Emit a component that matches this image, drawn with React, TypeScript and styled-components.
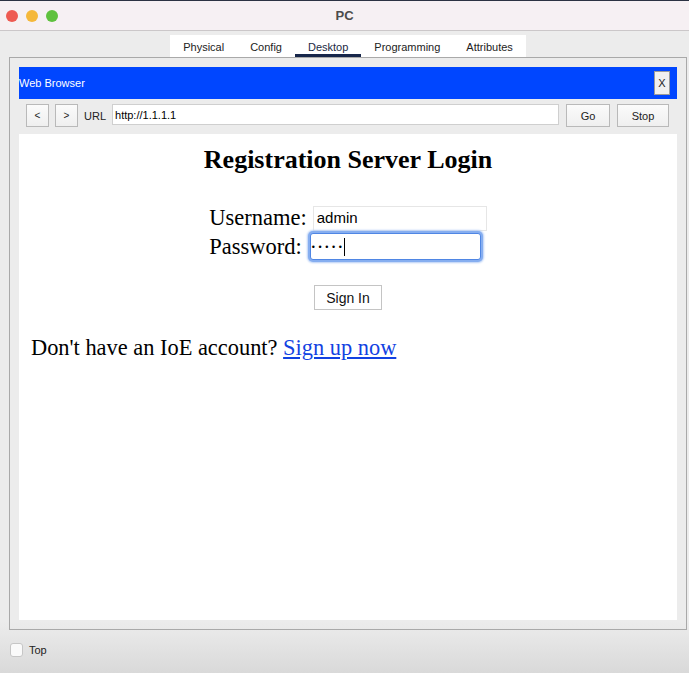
import styled, { createGlobalStyle } from 'styled-components'

const GlobalStyle = createGlobalStyle`
  html, body {
    margin: 0;
    padding: 0;
    background: #ececec;
  }
  * {
    box-sizing: border-box;
  }
`

const Window = styled.div`
  width: 689px;
  height: 673px;
  display: flex;
  flex-direction: column;
  overflow: hidden;
  font-family: 'Liberation Sans', Arial, sans-serif;
  background: #ececec;
`

const TitleBar = styled.header`
  position: relative;
  flex-shrink: 0;
  height: 31px;
  display: flex;
  align-items: center;
  justify-content: center;
  background: #f6f0f3;
  border-top: 1px solid #2b3243;
  border-bottom: 1px solid #cbc7c9;
`

const Lights = styled.div`
  position: absolute;
  left: 6px;
  top: 9px;
  display: flex;
  gap: 8px;
`

const Light = styled.span<{ $color: string }>`
  width: 12px;
  height: 12px;
  border-radius: 50%;
  background: ${({ $color }) => $color};
`

const WindowTitle = styled.h1`
  margin: 0;
  font-size: 13px;
  font-weight: 700;
  color: #4b4b4b;
`

const Body = styled.main`
  flex: 1;
  display: flex;
  flex-direction: column;
  background: linear-gradient(#ececec 0%, #ececec 92%, #d9d9d9 100%);
`

const TabStrip = styled.nav`
  align-self: center;
  display: flex;
  height: 22px;
  margin: 4px 0 0 7px;
  background: #ffffff;
`

const Tab = styled.span<{ $active?: boolean }>`
  display: flex;
  align-items: center;
  padding: 4px 13px 0;
  font-size: 11px;
  color: ${({ $active }) => ($active ? '#1c2a44' : '#222222')};
  border-bottom: 3px solid
    ${({ $active }) => ($active ? '#17264a' : 'transparent')};
`

const Frame = styled.section`
  flex-shrink: 0;
  height: 573px;
  margin: 0 2px 0 9px;
  padding: 9px;
  border: 1px solid #a9a9a9;
  display: flex;
  flex-direction: column;
`

const BlueBar = styled.div`
  height: 32px;
  flex-shrink: 0;
  display: flex;
  align-items: center;
  justify-content: space-between;
  padding-right: 7px;
  background: #0046ff;
  color: #ffffff;
  font-size: 11px;
`

const CloseButton = styled.button`
  width: 16px;
  height: 24px;
  padding: 0;
  font-family: inherit;
  font-size: 11px;
  color: #222;
  background: #f0f0f0;
  border: 1px solid #9a9a9a;
`

const Toolbar = styled.div`
  flex-shrink: 0;
  display: flex;
  align-items: center;
  gap: 6px;
  padding: 5px 8px 7px 7px;
`

const NavButton = styled.button<{ $w: number; $gap?: number }>`
  width: ${({ $w }) => $w}px;
  height: 23px;
  padding: 0;
  margin-left: ${({ $gap }) => $gap ?? 0}px;
  font-family: inherit;
  font-size: ${({ $w }) => ($w < 30 ? 10 : 11)}px;
  color: #222;
  background: linear-gradient(#fbfbfb, #efefef);
  border: 1px solid #b9b9b9;
`

const UrlLabel = styled.span`
  font-size: 11px;
  color: #222;
`

const UrlInput = styled.div`
  flex: 1;
  height: 21px;
  margin-top: -2px;
  display: flex;
  align-items: center;
  padding-left: 2px;
  font-size: 11px;
  color: #000;
  background: #fff;
  border: 1px solid #cfcfcf;
`

const Page = styled.div`
  flex: 1;
  display: flex;
  flex-direction: column;
  align-items: center;
  background: #ffffff;
  font-family: 'Liberation Serif', 'Times New Roman', serif;
  color: #000;
`

const Heading = styled.h2`
  margin: 11px 0 0;
  font-size: 26px;
  font-weight: 700;
`

const Form = styled.div`
  margin-top: 30px;
  display: grid;
  grid-template-columns: auto 174px;
  column-gap: 6px;
  row-gap: 2px;
  align-items: center;
  font-size: 22.5px;
  line-height: 26px;
`

const Field = styled.div<{ $focus?: boolean }>`
  height: ${({ $focus }) => ($focus ? 27 : 25)}px;
  display: flex;
  align-items: center;
  padding-left: ${({ $focus }) => ($focus ? 1 : 3)}px;
  margin-left: ${({ $focus }) => ($focus ? -3 : 0)}px;
  width: ${({ $focus }) => ($focus ? 171 : 174)}px;
  font-family: 'Liberation Sans', Arial, sans-serif;
  font-size: 15px;
  background: #fff;
  border: 1px solid ${({ $focus }) => ($focus ? '#4f86e4' : '#e6e6e6')};
  box-shadow: ${({ $focus }) =>
    $focus ? '0 0 0 2px #86aef0, 0 0 2px 3px #b7cff6' : 'none'};
  border-radius: ${({ $focus }) => ($focus ? 3 : 0)}px;
`

const Dots = styled.span`
  letter-spacing: 3.6px;
  font-size: 9px;
`

const Caret = styled.span`
  display: inline-block;
  width: 1px;
  height: 18px;
  margin-left: -2px;
  background: #000;
`

const SignIn = styled.button`
  margin-top: 25px;
  width: 68px;
  height: 25px;
  font-family: 'Liberation Sans', Arial, sans-serif;
  font-size: 14px;
  color: #111;
  background: #fff;
  border: 1px solid #c4c4c4;
`

const Signup = styled.p`
  align-self: flex-start;
  margin: 25px 0 0 12px;
  font-size: 22.4px;
`

const SignupLink = styled.a`
  color: #1242e2;
  text-decoration: underline;
`

const BottomBar = styled.footer`
  display: flex;
  align-items: center;
  gap: 6px;
  margin-top: 13px;
  padding-left: 10px;
  font-size: 11px;
  color: #222;
`

const Check = styled.span`
  width: 13px;
  height: 14px;
  border-radius: 3px;
  background: #fafafa;
  border: 1px solid #c6c6c6;
`

export default function App() {
  const tabs = ['Physical', 'Config', 'Desktop', 'Programming', 'Attributes']
  return (
    <Window>
      <GlobalStyle />
      <TitleBar>
        <Lights>
          <Light $color="#ee5a52" />
          <Light $color="#f5b83a" />
          <Light $color="#5fc13e" />
        </Lights>
        <WindowTitle>PC</WindowTitle>
      </TitleBar>
      <Body>
        <TabStrip>
          {tabs.map((t) => (
            <Tab key={t} $active={t === 'Desktop'}>
              {t}
            </Tab>
          ))}
        </TabStrip>
        <Frame>
          <BlueBar>
            <span>Web Browser</span>
            <CloseButton>X</CloseButton>
          </BlueBar>
          <Toolbar>
            <NavButton $w={23}>&lt;</NavButton>
            <NavButton $w={23}>&gt;</NavButton>
            <UrlLabel>URL</UrlLabel>
            <UrlInput>http://1.1.1.1</UrlInput>
            <NavButton $w={44} $gap={1}>Go</NavButton>
            <NavButton $w={52} $gap={1}>Stop</NavButton>
          </Toolbar>
          <Page>
            <Heading>Registration Server Login</Heading>
            <Form>
              <span>Username:</span>
              <Field>admin</Field>
              <span>Password:</span>
              <Field $focus>
                <Dots>•••••</Dots>
                <Caret />
              </Field>
            </Form>
            <SignIn>Sign In</SignIn>
            <Signup>
              Don't have an IoE account? <SignupLink href="#">Sign up now</SignupLink>
            </Signup>
          </Page>
        </Frame>
        <BottomBar>
          <Check />
          <span>Top</span>
        </BottomBar>
      </Body>
    </Window>
  )
}
